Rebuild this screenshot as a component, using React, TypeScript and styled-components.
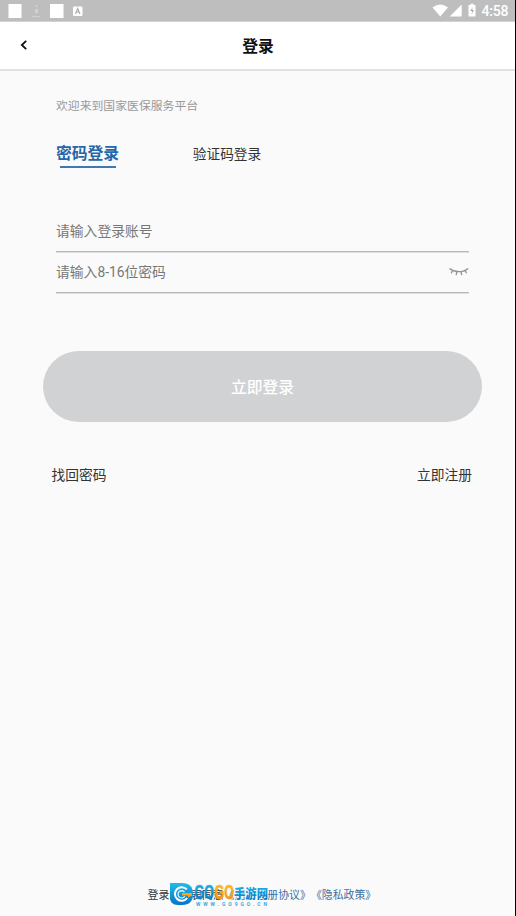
import React from "react";
import styled, { createGlobalStyle } from "styled-components";

const GlobalStyle = createGlobalStyle`
  * { box-sizing: border-box; }
  body { margin: 0; background: #fafafa; }
  button, input { font-family: inherit; border: 0; padding: 0; background: none; }
`;

const Screen = styled.div`
  display: flex;
  flex-direction: column;
  width: 516px;
  height: 916px;
  overflow: hidden;
  background: #fafafa;
  border-right: 1px solid #000;
  font-family: Roboto, "Noto Sans CJK SC", sans-serif;
  color: #333;
`;

const StatusBar = styled.div`
  display: flex;
  justify-content: space-between;
  flex: none;
  height: 22px;
  background: #bebebe;
  border-bottom: 1px solid #d2d2d2;
`;

const Header = styled.header`
  display: grid;
  grid-template-columns: 48px 1fr 47px;
  align-items: center;
  flex: none;
  height: 49px;
  background: #fff;
  border-bottom: 2px solid #e1e1e1;
`;

const BackButton = styled.button`
  display: flex;
  justify-content: center;
  padding-bottom: 1px;
`;

const Title = styled.h1`
  margin: 0;
  padding-top: 2px;
  color: #111;
  font-size: 15.8px;
  line-height: 24px;
  font-weight: 700;
  text-align: center;
`;

const Welcome = styled.p`
  margin: 24px 0 0 56px;
  color: #999;
  font-size: 11.85px;
  line-height: 23px;
`;

const Tabs = styled.nav`
  display: flex;
  margin: 23px 0 0 56px;
  height: 27px;
`;

const Tab = styled.button<{ $active?: boolean }>`
  display: flex;
  flex-direction: column;
  align-items: center;
  width: ${(p) => (p.$active ? "63px" : "70px")};
  margin-right: 73px;
  padding-top: 1px;
  color: ${(p) => (p.$active ? "#2468aa" : "#333")};
  font-size: ${(p) => (p.$active ? "15.8px" : "13.7px")};
  font-weight: ${(p) => (p.$active ? 700 : 400)};
  line-height: 24px;
  white-space: nowrap;
`;

const TabLine = styled.span`
  flex: none;
  width: 56px;
  height: 2px;
  background: #3f79b4;
`;

const Form = styled.form`
  display: flex;
  flex-direction: column;
  margin: 43px 46px 0 56px;
`;

const Field = styled.label`
  display: flex;
  align-items: center;
  height: 41px;
  border-bottom: 1px solid #b9b9b9;
  box-shadow: 0 1px 0 #dedede;
`;

const Input = styled.input`
  flex: 1;
  min-width: 0;
  height: 24px;
  outline: 0;
  font-size: 13.8px;
  line-height: 24px;
  &::placeholder { color: #777; opacity: 1; }
`;

const LoginButton = styled.button`
  flex: none;
  height: 71px;
  margin: 58px 33px 0 43px;
  border-radius: 36px;
  background: #d1d2d4;
  color: #fff;
  font-size: 15.8px;
  font-weight: 500;
`;

const Links = styled.div`
  display: flex;
  justify-content: space-between;
  margin: 41px 43px 0 51.5px;
  font-size: 13.75px;
  line-height: 24px;
`;

const Footer = styled.footer`
  position: relative;
  margin: auto 0 10px 147.5px;
  font-size: 10.9px;
  line-height: 20px;
  white-space: nowrap;
  text-spacing-trim: space-all;
`;

const Agreement = styled.span`
  color: #3d6f9f;
`;

const Watermark = styled.svg`
  position: absolute;
  left: 21px;
  top: -5px;
`;

const NotificationIcons = () => (
  <svg width="100" height="21" viewBox="0 0 100 21">
    <path d="M8.5 4h13v14h-13zM50 4h13.5v14H50z" fill="#fff" />
    <path d="M35.5 5h2v2h-2zM35 9h3v4h-3zM32 16h8v1h-8z" fill="#d0d0d0" />
    <rect x="73" y="6.5" width="9.5" height="9.5" rx="1.2" fill="#fff" />
    <path d="m75.5 14 2.2-5.5L80 14m-3.7-2h2.9" fill="none" stroke="#aaa" strokeWidth="1.1" />
  </svg>
);

const SystemIcons = () => (
  <svg width="100" height="21" viewBox="0 0 100 21">
    <path d="M17.5 7.4Q25.3 1.5 33 7.4L25.3 16.6ZM46.7 4.6v12H34.7Z" fill="#fff" />
    <path d="M53.5 5h2V3.8h3V5h2v11.5h-7Z" fill="#fff" />
    <path d="m57.6 7-2.3 4h1.8l-.5 3.2 2.4-4.2h-1.8z" fill="#aaa" />
    <text x="66.5" y="16" fill="#fff" fontFamily="Roboto, sans-serif" fontSize="14" fontWeight="500" textLength="27">4:58</text>
  </svg>
);

const BackIcon = () => (
  <svg width="12" height="12" viewBox="0 0 12 12">
    <path d="M8.2 1.8 3.8 6l4.4 4.2" fill="none" stroke="#111" strokeWidth="1.8" />
  </svg>
);

const ClosedEyeIcon = () => (
  <svg width="20" height="12" viewBox="0 0 20 12">
    <path d="M.5 2.4c5.4 4.3 13.5 4.3 18.7 0M3.6 4.6 2.2 7.2M7.8 5.7l-.6 3.5M12.1 5.7l.6 3.5M16.1 4.6l1.5 2.6" fill="none" stroke="#929292" strokeWidth="1.3" />
  </svg>
);

const SiteMark = () => (
  <Watermark width="102" height="28" viewBox="0 0 102 28">
    <defs>
      <linearGradient id="blue" x2="0" y2="1">
        <stop stopColor="#20bce9" /><stop offset="1" stopColor="#0874c7" />
      </linearGradient>
      <linearGradient id="gold" x2="0" y2="1">
        <stop stopColor="#ffc526" /><stop offset="1" stopColor="#f58b0b" />
      </linearGradient>
    </defs>
    <path d="M1 2h12q11 0 11 11t-11 11H9Q1 24 1 16Z" fill="url(#blue)" />
    <path d="M17.8 8.4A6.8 6.8 0 1 0 18.2 17" fill="none" stroke="#fff" strokeWidth="2" />
    <path d="M15.5 11.2a3.6 3.6 0 1 0 .3 3.8" fill="none" stroke="#d2f5ff" strokeWidth="1.3" />
    <path d="M13 12h10v2.5l-4 2v-2h-6z" fill="#f8a51b" />
    <g fontFamily="'Liberation Sans', sans-serif" fontSize="19.5" fontWeight="700" strokeWidth="0.6">
      <text x="25.5" y="17.5" fill="url(#blue)" stroke="url(#blue)" textLength="19.5" lengthAdjust="spacingAndGlyphs">GO</text>
      <text x="45.5" y="17.5" fill="url(#gold)" stroke="url(#gold)" textLength="19.5" lengthAdjust="spacingAndGlyphs">GO</text>
    </g>
    <text x="65" y="17" fill="url(#blue)" stroke="#fff" strokeWidth="1" paintOrder="stroke" fontFamily="'Noto Sans CJK SC', sans-serif" fontSize="13" fontWeight="900" textLength="34" lengthAdjust="spacingAndGlyphs">手游网</text>
    <text x="27" y="25" fill="#38a9df" fontFamily="Roboto, sans-serif" fontSize="5" fontWeight="700" textLength="71">WWW.GO9GO.CN</text>
  </Watermark>
);

export default function App() {
  return (
    <>
      <GlobalStyle />
      <Screen>
        <StatusBar><NotificationIcons /><SystemIcons /></StatusBar>
        <Header>
          <BackButton aria-label="返回"><BackIcon /></BackButton>
          <Title>登录</Title>
        </Header>
        <Welcome>欢迎来到国家医保服务平台</Welcome>
        <Tabs>
          <Tab $active>密码登录<TabLine /></Tab>
          <Tab>验证码登录</Tab>
        </Tabs>
        <Form>
          <Field><Input placeholder="请输入登录账号" /></Field>
          <Field><Input type="password" placeholder="请输入8-16位密码" /><ClosedEyeIcon /></Field>
        </Form>
        <LoginButton>立即登录</LoginButton>
        <Links><span>找回密码</span><span>立即注册</span></Links>
        <Footer>
          登录即代表同意<Agreement>《用户注册协议》《隐私政策》</Agreement>
          <SiteMark />
        </Footer>
      </Screen>
    </>
  );
}
